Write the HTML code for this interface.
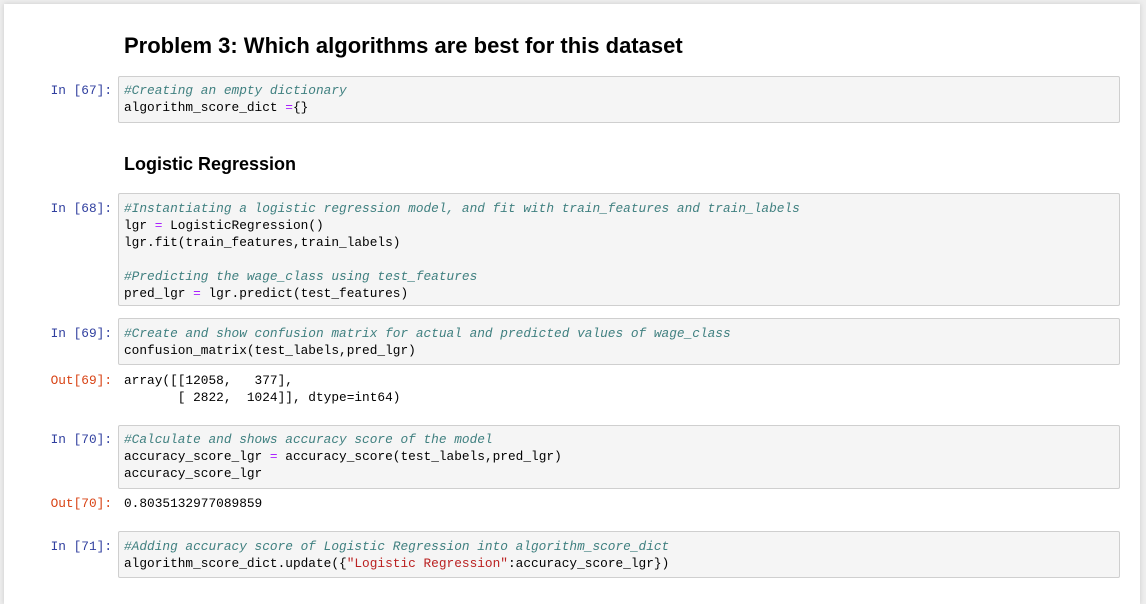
<!DOCTYPE html>
<html><head><meta charset="utf-8"><style>
body{margin:0;width:1146px;height:600px;overflow:hidden;background:#eee;position:relative}
.page{position:absolute;left:4px;top:4px;width:1136px;height:600px;background:#fff;box-shadow:0 0 5px rgba(0,0,0,.15)}
.a{position:absolute}
.h{font-family:"Liberation Sans",Arial,sans-serif;font-weight:bold;color:#000}
.box{position:absolute;left:118px;width:1002px;background:#f5f5f5;border:1px solid #cfcfcf;border-radius:2px;box-sizing:border-box}
.code{position:absolute;font-family:"Liberation Mono",monospace;font-size:12.8px;line-height:17px;white-space:pre;color:#000}
.p{position:absolute;font-family:"Liberation Mono",monospace;font-size:12.8px;line-height:17px;white-space:pre;text-align:right;right:1034px;color:#303F9F}
.o{color:#D84315}
.c{color:#408080;font-style:italic}
.e{color:#AA22FF}
.s{color:#BA2121}
</style></head><body>
<div class="page"></div>
<div class="a h" style="left:124px;top:33px;font-size:22px">Problem 3: Which algorithms are best for this dataset</div>
<div class="p" style="top:82px">In [67]:</div>
<div class="box" style="top:76px;height:47px"></div>
<div class="code" style="left:124px;top:82px"><span class="c">#Creating an empty dictionary</span>
algorithm_score_dict <span class="e">=</span>{}</div>

<div class="a h" style="left:124px;top:154px;font-size:18px">Logistic Regression</div>

<div class="p" style="top:200px">In [68]:</div>
<div class="box" style="top:193px;height:113px"></div>
<div class="code" style="left:124px;top:200px"><span class="c">#Instantiating a logistic regression model, and fit with train_features and train_labels</span>
lgr <span class="e">=</span> LogisticRegression()
lgr.fit(train_features,train_labels)

<span class="c">#Predicting the wage_class using test_features</span>
pred_lgr <span class="e">=</span> lgr.predict(test_features)</div>

<div class="p" style="top:325px">In [69]:</div>
<div class="box" style="top:318px;height:47px"></div>
<div class="code" style="left:124px;top:325px"><span class="c">#Create and show confusion matrix for actual and predicted values of wage_class</span>
confusion_matrix(test_labels,pred_lgr)</div>
<div class="p o" style="top:372px">Out[69]:</div>
<div class="code" style="left:124px;top:372px">array([[12058,   377],
       [ 2822,  1024]], dtype=int64)</div>

<div class="p" style="top:431px">In [70]:</div>
<div class="box" style="top:425px;height:64px"></div>
<div class="code" style="left:124px;top:431px"><span class="c">#Calculate and shows accuracy score of the model</span>
accuracy_score_lgr <span class="e">=</span> accuracy_score(test_labels,pred_lgr)
accuracy_score_lgr</div>
<div class="p o" style="top:495px">Out[70]:</div>
<div class="code" style="left:124px;top:495px">0.8035132977089859</div>

<div class="p" style="top:538px">In [71]:</div>
<div class="box" style="top:531px;height:47px"></div>
<div class="code" style="left:124px;top:538px"><span class="c">#Adding accuracy score of Logistic Regression into algorithm_score_dict</span>
algorithm_score_dict.update({<span class="s">"Logistic Regression"</span>:accuracy_score_lgr})</div>
</body></html>
